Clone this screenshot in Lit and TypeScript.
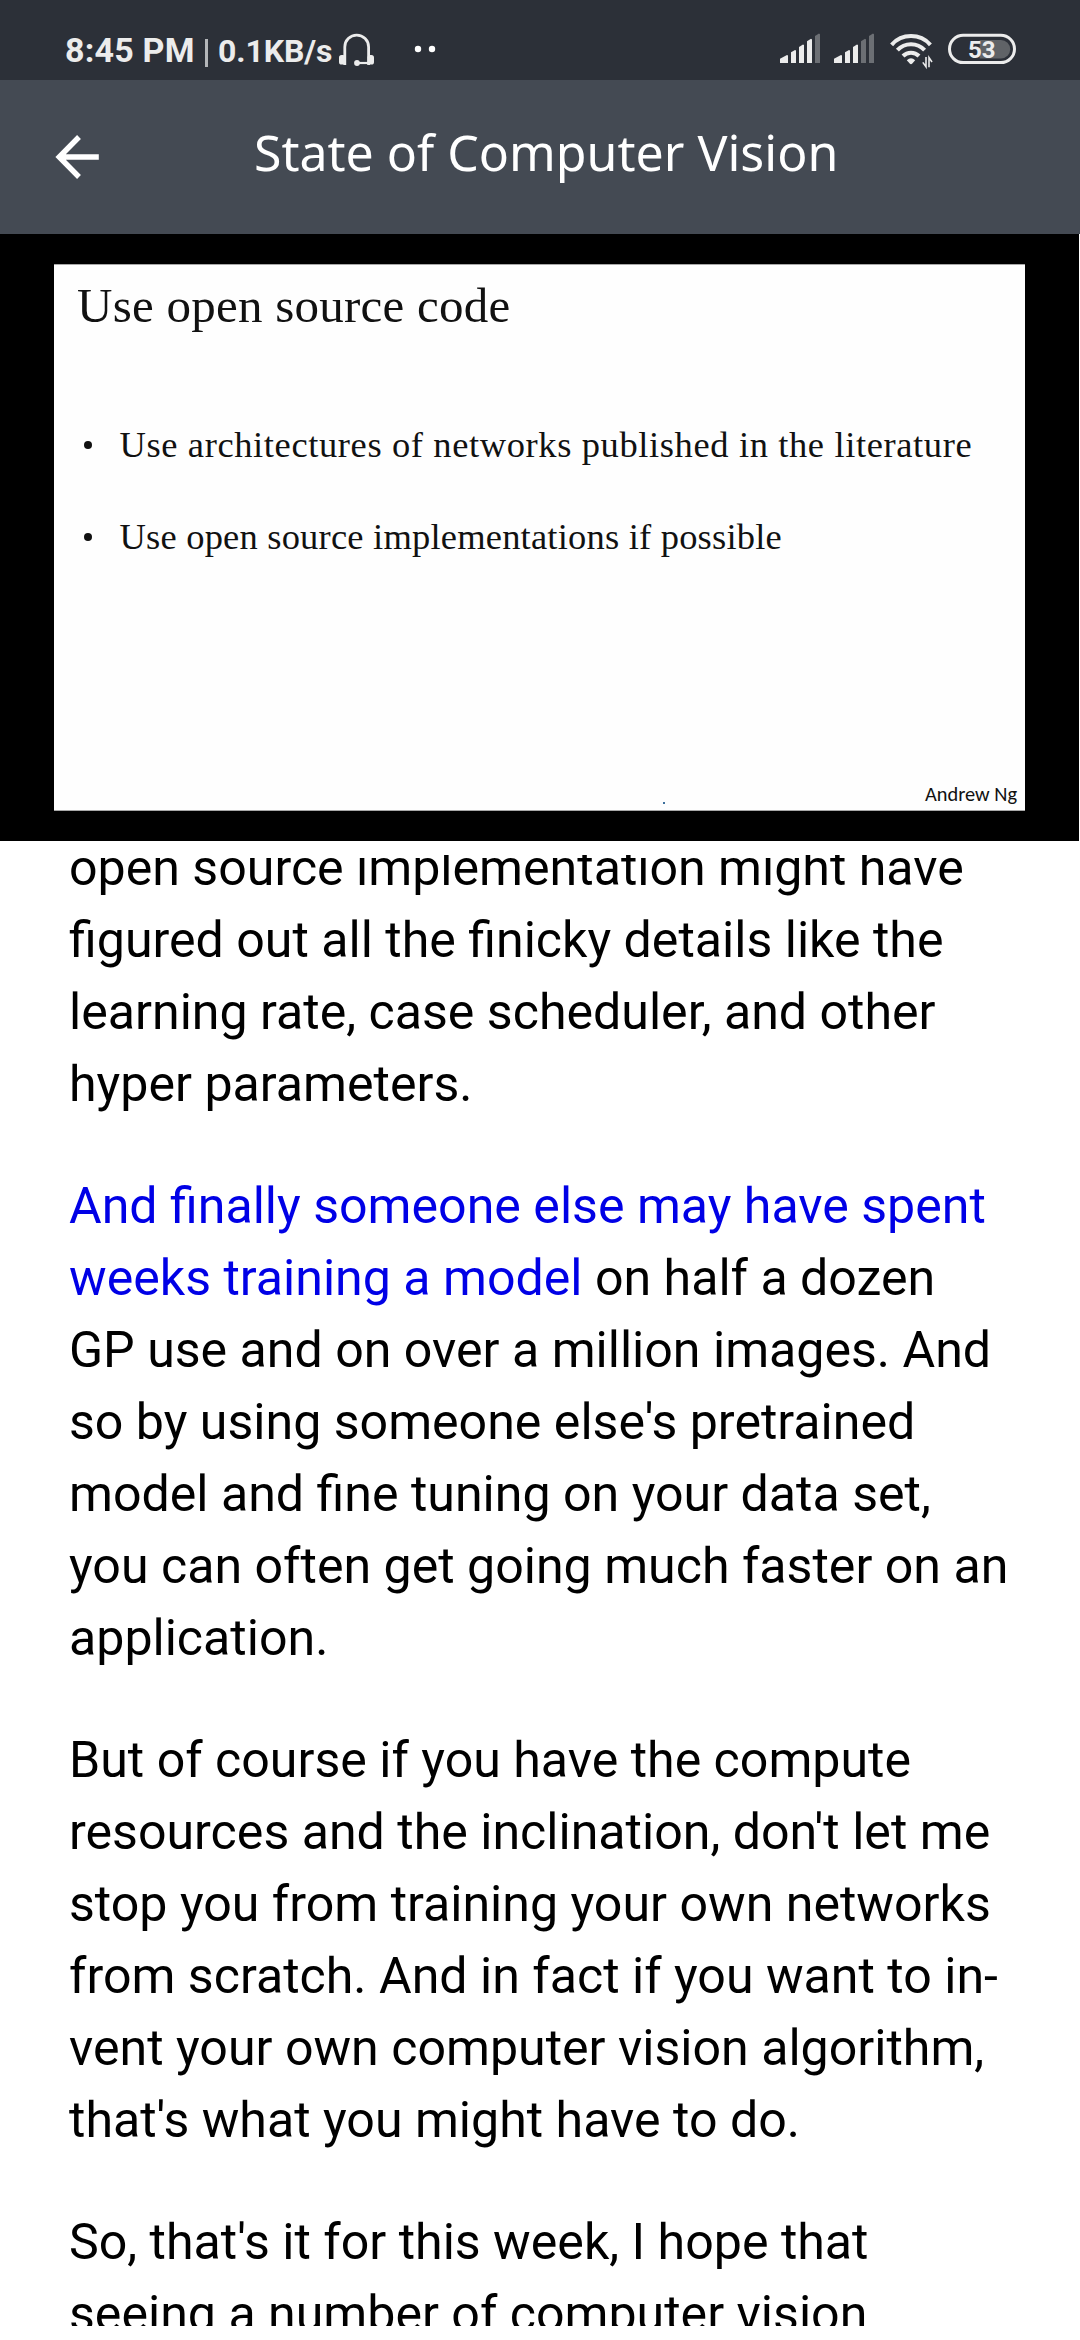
import { LitElement, html, svg, css } from "lit";
import { classMap } from "lit/directives/class-map.js";

interface Run {
  text: string;
  active?: boolean;
}

const transcript: Run[][][] = [
  [
    [{ text: "open source implementation might have" }],
    [{ text: "figured out all the finicky details like the" }],
    [{ text: "learning rate, case scheduler, and other" }],
    [{ text: "hyper parameters." }],
  ],
  [
    [{ text: "And finally someone else may have spent", active: true }],
    [{ text: "weeks training a model", active: true }, { text: " on half a dozen" }],
    [{ text: "GP use and on over a million images. And" }],
    [{ text: "so by using someone else's pretrained" }],
    [{ text: "model and fine tuning on your data set," }],
    [{ text: "you can often get going much faster on an" }],
    [{ text: "application." }],
  ],
  [
    [{ text: "But of course if you have the compute" }],
    [{ text: "resources and the inclination, don't let me" }],
    [{ text: "stop you from training your own networks" }],
    [{ text: "from scratch. And in fact if you want to in-" }],
    [{ text: "vent your own computer vision algorithm," }],
    [{ text: "that's what you might have to do." }],
  ],
  [
    [{ text: "So, that's it for this week, I hope that" }],
    [{ text: "seeing a number of computer vision" }],
  ],
];

const signalBars = [
  "0,38.7 7,35 8,35.5 8,43 0,43",
  "11,32.3 15,30 16,30.5 16,43 11,43",
  "19,27 23,24.5 24,25 24,43 19,43",
  "27,21.3 31,18.8 32,19.5 32,43 27,43",
  "35,16 39,13.6 40,14.2 40,43 35,43",
];

class StatusBar extends LitElement {
  static styles = css`
    :host {
      display: flex;
      box-sizing: border-box;
      height: 80px;
      padding: 20px 64px 0 65px;
      background: #2c3038;
      color: #ececec;
      font-family: Roboto, "Liberation Sans", sans-serif;
      font-weight: 700;
      line-height: 60px;
      white-space: nowrap;
    }
    svg {
      display: block;
      flex: none;
      height: 60px;
    }
    .clock {
      width: 140px;
      font-size: 34px;
      letter-spacing: 0.2px;
    }
    .divider {
      width: 3px;
      height: 28px;
      margin: 19px 10px 0 0;
      background: #b4b6b9;
    }
    .rate {
      width: 121px;
      margin-top: 1px;
      font-size: 32px;
      letter-spacing: -0.1px;
    }
    .dots {
      margin-left: 40px;
    }
    .right {
      display: flex;
      margin-left: auto;
    }
    .signal {
      margin-right: 14px;
    }
    .wifi {
      margin: 0 15px 0 2px;
    }
    .on {
      fill: #ececec;
    }
    .off {
      fill: #6c6f74;
    }
    .level {
      font-size: 24px;
      font-weight: 700;
      fill: #ececec;
    }
  `;

  private signal(strength: number) {
    return html`<svg class="signal" width="40" viewBox="0 0 40 60">
      ${signalBars.map(
        (points, i) =>
          svg`<polygon class=${classMap({ on: i < strength, off: i >= strength })} points=${points}></polygon>`,
      )}
    </svg>`;
  }

  render() {
    return html`
      <span class="clock">8:45 PM</span>
      <span class="divider"></span>
      <span class="rate">0.1KB/s</span>
      <svg width="35" viewBox="339 20 35 60" fill="none" stroke="#ececec">
        <path d="M344.8 65V47a11.9 11.9 0 0 1 23.8 0V65" stroke-width="2.8" />
        <rect class="on" x="339" y="55" width="6.5" height="9.5" rx="2.6" stroke="none" />
        <rect class="on" x="367.5" y="55" width="6.5" height="9.5" rx="2.6" stroke="none" />
        <path d="M357 63H369" stroke-width="2.2" />
        <circle class="on" cx="357" cy="63" r="2.9" stroke="none" />
      </svg>
      <svg class="dots" width="22" viewBox="414 20 22 60">
        <circle cx="418" cy="49" r="3.2" fill="#fff" />
        <circle cx="432" cy="49" r="3.2" fill="#fff" />
      </svg>
      <div class="right">
        ${this.signal(4)} ${this.signal(3)}
        <svg class="wifi" width="43" viewBox="890 20 43 60" fill="none" stroke="#ececec">
          <g stroke-width="4">
            <path d="M891.6 44.8A26 26 0 0 1 930.4 44.8" />
            <path d="M897.4 50.2A18.4 18.4 0 0 1 924.6 50.2" />
            <path d="M903 56A11.2 11.2 0 0 1 919 56" />
          </g>
          <path class="on" stroke="none" d="M906.8 60.2Q911 56.4 915.2 60.2L912.3 63.5Q911 64.8 909.7 63.5Z" />
          <path d="M926 57V66.8L922.8 62.4M929 67.2V57.6L932 62" stroke-width="1.6" />
        </svg>
        <svg width="68" viewBox="948 20 68 60">
          <path d="M979.7 40H1001a9.2 9.2 0 0 1 0 18.4H979.7Z" fill="#606367" />
          <rect x="949.5" y="35.2" width="65" height="27.4" rx="13.7" fill="none" stroke="#ececec" stroke-width="3" />
          <text class="level" x="968" y="57.8">53</text>
        </svg>
      </div>
    `;
  }
}
customElements.define("status-bar", StatusBar);

class TitleBar extends LitElement {
  static styles = css`
    :host {
      display: flex;
      height: 154px;
      padding-left: 54px;
      background: #444a53;
      color: #fff;
    }
    svg {
      display: block;
      flex: none;
      margin-top: 53px;
    }
    .title {
      margin: 0 0 0 154px;
      font: 400 50px/145px "Noto Sans", "Open Sans", sans-serif;
      white-space: nowrap;
    }
  `;

  render() {
    return html`
      <svg width="46" height="48" viewBox="54 133 46 48" fill="none" stroke="#fff" stroke-width="5.4">
        <path d="M79 137L59.2 157L79 177M59 157H98.8" />
      </svg>
      <h1 class="title">State of Computer Vision</h1>
    `;
  }
}
customElements.define("title-bar", TitleBar);

class LectureSlide extends LitElement {
  static styles = css`
    :host {
      display: block;
      box-sizing: border-box;
      width: 1079px;
      height: 607px;
      padding: 30px 54px;
      background: #000;
    }
    .slide {
      display: flex;
      flex-direction: column;
      box-sizing: border-box;
      height: 547px;
      border: solid #a8a8a8;
      border-width: 1px 0;
      background: #fefefe;
      color: #111;
      font-family: "Century Schoolbook", "Liberation Serif", serif;
      white-space: nowrap;
    }
    .heading {
      margin: 0 0 0 23px;
      font-size: 49px;
      font-weight: 400;
      line-height: 81px;
      letter-spacing: 0.25px;
    }
    .points {
      display: grid;
      gap: 31.6px;
      margin: 69px 0 0;
      padding: 0 0 0 30px;
      list-style: none;
      font-size: 36.5px;
      line-height: 60px;
    }
    .point {
      display: flex;
      align-items: center;
      gap: 27.5px;
    }
    .point::before {
      content: "";
      width: 8px;
      height: 8px;
      border-radius: 50%;
      background: #111;
    }
    .wide {
      letter-spacing: 0.61px;
    }
    .regular {
      letter-spacing: 0.2px;
    }
    .footer {
      display: flex;
      justify-content: space-between;
      margin-top: auto;
      padding: 0 8px 1px 609px;
      font: 20.4px/30px Carlito, "Open Sans", sans-serif;
    }
    .pointer {
      width: 2px;
      height: 2px;
      margin-top: 23px;
      background: #3c6f9c;
    }
  `;

  render() {
    return html`
      <div class="slide">
        <h2 class="heading">Use open source code</h2>
        <ul class="points">
          <li class="point wide">Use architectures of networks published in the literature</li>
          <li class="point regular">Use open source implementations if possible</li>
        </ul>
        <div class="footer"><span class="pointer"></span><span>Andrew Ng</span></div>
      </div>
    `;
  }
}
customElements.define("lecture-slide", LectureSlide);

class AppRoot extends LitElement {
  static styles = css`
    :host {
      display: flex;
      flex-direction: column;
      box-sizing: border-box;
      height: 2340px;
      padding-bottom: 14px;
      overflow: hidden;
      background: #fff;
    }
    status-bar,
    title-bar,
    lecture-slide {
      flex: none;
    }
    .transcript {
      flex: 1;
      min-height: 0;
      margin-top: 14px;
      overflow: hidden;
      color: #000;
      font: 400 50.1px/72px Roboto, "Liberation Sans", sans-serif;
    }
    .scrolled {
      margin: -23px 0 0 69px;
    }
    .paragraph {
      margin: 0 0 50px;
    }
    .line {
      display: block;
      white-space: pre;
    }
    .active {
      color: #0000e6;
    }
  `;

  render() {
    return html`
      <status-bar></status-bar>
      <title-bar></title-bar>
      <lecture-slide></lecture-slide>
      <main class="transcript">
        <div class="scrolled">
          ${transcript.map(
            (lines) =>
              html`<p class="paragraph">${lines.map(
                (runs) =>
                  html`<span class="line">${runs.map(
                    (run) => html`<span class=${classMap({ active: !!run.active })}>${run.text}</span>`,
                  )}</span>`,
              )}</p>`,
          )}
        </div>
      </main>
    `;
  }
}
customElements.define("app-root", AppRoot);
